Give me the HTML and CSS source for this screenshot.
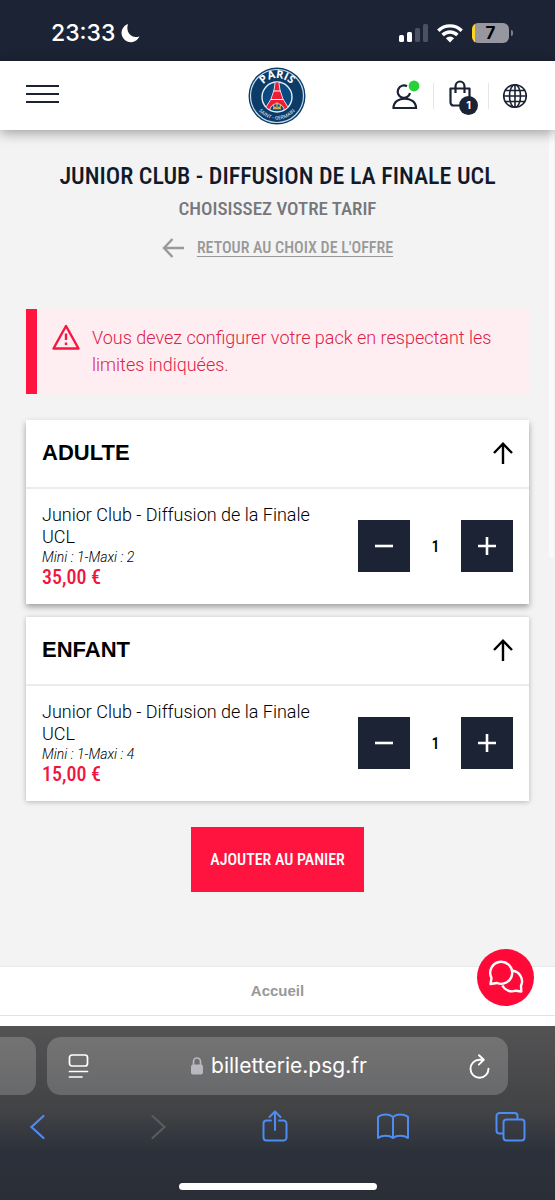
FILE: index.html
```html
<!DOCTYPE html>
<html lang="fr">
<head>
<meta charset="utf-8">
<meta name="viewport" content="width=device-width, initial-scale=1">
<title>Junior Club - Diffusion de la Finale UCL</title>
<link rel="stylesheet" href="styles.css">
</head>
<body>
<div class="status">
  <div class="status-time">23:33
    <svg width="19" height="20" viewBox="0 0 19 20"><path d="M7 1A9.300 9.300 0 1 0 18.500 13.200C11.500 16.500 4 9.500 7 1Z" fill="#fff"/></svg>
  </div>
  <div class="status-icons">
    <svg width="29" height="19" viewBox="0 0 29 19"><rect y="11" width="5" height="7" rx="1.5" fill="#fff"/><rect x="8" y="8" width="5" height="10" rx="1.5" fill="#fff"/><rect x="16" y="4" width="5" height="14" rx="1.5" fill="#4a5160"/><rect x="24" width="5" height="18" rx="1.5" fill="#4a5160"/></svg>
    <svg width="26" height="19" viewBox="0 0 26 19" fill="none" stroke="#fff" stroke-width="3.4"><path d="M1.3 6.7a16.6 16.6 0 0 1 23.4 0M5.6 11a10.5 10.5 0 0 1 14.8 0"/><path d="M13 18.5 8.9 14.300a5.800 5.800 0 0 1 8.200 0Z" fill="#fff" stroke="none"/></svg>
    <div class="battery">7</div>
  </div>
</div>

<header class="header">
  <button class="icon-btn menu" aria-label="Menu"><span></span><span></span><span></span></button>
  <a class="logo" href="#" aria-label="Paris Saint-Germain">
    <svg width="58" height="58" viewBox="0 0 58 58">
      <defs>
        <path id="arc-top" d="M11 29a18 18 0 0 1 36 0"/>
        <path id="arc-bottom" d="M5.500 29a23.500 23.500 0 0 0 47 0"/>
        <clipPath id="disc"><circle cx="29" cy="30" r="14.500"/></clipPath>
      </defs>
      <circle cx="29" cy="29" r="28.500" fill="#0b3b66"/>
      <circle cx="29" cy="29" r="26.500" fill="none" stroke="#c5dceb" stroke-width="1.200"/>
      <circle cx="29" cy="30" r="15" fill="#0b4a80" stroke="#e6f0f7" stroke-width="1.400"/>
      <g clip-path="url(#disc)">
        <path d="M27.500 13h3l1.500 10 3 9 8 13h-6.500c0-11-15-11-15 0H15L23 32l3-9Z" fill="#ee1c35" stroke="#fff" stroke-width=".8"/>
        <path d="M25.500 24h7M23 32.500h12" stroke="#fff" stroke-width="1"/>
      </g>
      <path d="M29 35v7M26 37.500c-1.500 2 0 3 2 3M32 37.500c1.500 2 0 3-2 3M25 41.500h8" fill="none" stroke="#d1ae55" stroke-width="1.300"/>
      <text class="logo-top" text-anchor="middle"><textPath href="#arc-top" startOffset="50%">PARIS</textPath></text>
      <text class="logo-bottom" text-anchor="middle"><textPath href="#arc-bottom" startOffset="50%">SAINT - GERMAIN</textPath></text>
    </svg>
  </a>
  <nav class="tools">
    <button class="icon-btn" aria-label="Compte">
      <svg width="30" height="30" viewBox="0 0 30 30" fill="none" stroke="#1a2233" stroke-width="2.200"><path d="M17 5.300A6.200 6.200 0 1 0 20 12"/><path d="M3.500 27c0-12.500 22.500-12.500 22.500 0Z"/><circle cx="24" cy="5" r="5.400" fill="#28d138" stroke="none"/></svg>
    </button>
    <button class="icon-btn cart" aria-label="Panier">
      <svg width="30" height="34" viewBox="0 0 30 34"><path d="M3.500 9.500h19v14a3 3 0 0 1-3 3h-13a3 3 0 0 1-3-3ZM8.500 14V7.500a4.500 5 0 0 1 9 0V14" fill="none" stroke="#1a2233" stroke-width="2.200" stroke-linejoin="round"/></svg>
      <span class="badge">1</span>
    </button>
    <button class="icon-btn" aria-label="Langue">
      <svg width="26" height="26" viewBox="0 0 26 26" fill="none" stroke="#1a2233" stroke-width="1.600"><circle cx="13" cy="13" r="11.300"/><ellipse cx="13" cy="13" rx="5.500" ry="11.300"/><path d="M13 1.500v23M1.500 13h23M3.500 7.500h19M3.500 18.500h19"/></svg>
    </button>
  </nav>
</header>

<main class="main">
  <div class="scrollbar"></div>
  <h1>Junior Club - Diffusion de la Finale UCL</h1>
  <h2>Choisissez votre tarif</h2>
  <div class="back">
    <svg width="22" height="20" viewBox="0 0 22 20" fill="none" stroke="#999" stroke-width="2.400"><path d="M10.500 1 2 10l8.500 9M2 10h20"/></svg>
    <a href="#">Retour au choix de l'offre</a>
  </div>

  <div class="alert" role="alert">
    <svg width="28" height="26" viewBox="0 0 28 26" fill="none" stroke="#f5173f" stroke-width="2.400" stroke-linejoin="round"><path d="M14 2 26.500 24.500h-25ZM14 9.500v6.500M14 18.500v2.500"/></svg>
    <p>Vous devez configurer votre pack en respectant les limites indiquées.</p>
  </div>

  <section class="card raised">
    <div class="card-head">
      <h3>ADULTE</h3>
      <button class="icon-btn" aria-label="Replier"><svg width="20" height="22" viewBox="0 0 20 22" fill="none" stroke="#000" stroke-width="2.400"><path d="M10 22V2M1 11l9-9.300 9 9.300"/></svg></button>
    </div>
    <div class="card-body">
      <div class="offer">
        <div class="offer-name">Junior Club - Diffusion de la Finale UCL</div>
        <div class="limits">Mini : 1-Maxi : 2</div>
        <div class="price">35,00 €</div>
      </div>
      <div class="stepper">
        <button aria-label="Retirer un adulte"><svg width="20" height="20" viewBox="0 0 20 20"><path d="M1 10h18" stroke="#fff" stroke-width="2.600"/></svg></button>
        <output>1</output>
        <button aria-label="Ajouter un adulte"><svg width="20" height="20" viewBox="0 0 20 20"><path d="M1 10h18M10 1v18" stroke="#fff" stroke-width="2.600"/></svg></button>
      </div>
    </div>
  </section>

  <section class="card">
    <div class="card-head">
      <h3>ENFANT</h3>
      <button class="icon-btn" aria-label="Replier"><svg width="20" height="22" viewBox="0 0 20 22" fill="none" stroke="#000" stroke-width="2.400"><path d="M10 22V2M1 11l9-9.300 9 9.300"/></svg></button>
    </div>
    <div class="card-body">
      <div class="offer">
        <div class="offer-name">Junior Club - Diffusion de la Finale UCL</div>
        <div class="limits">Mini : 1-Maxi : 4</div>
        <div class="price">15,00 €</div>
      </div>
      <div class="stepper">
        <button aria-label="Retirer un enfant"><svg width="20" height="20" viewBox="0 0 20 20"><path d="M1 10h18" stroke="#fff" stroke-width="2.600"/></svg></button>
        <output>1</output>
        <button aria-label="Ajouter un enfant"><svg width="20" height="20" viewBox="0 0 20 20"><path d="M1 10h18M10 1v18" stroke="#fff" stroke-width="2.600"/></svg></button>
      </div>
    </div>
  </section>

  <button class="submit">AJOUTER AU PANIER</button>
</main>

<footer class="footer">
  <div class="crumb"><a href="#">Accueil</a></div>
  <button class="chat" aria-label="Discussion">
    <svg width="36" height="34" viewBox="0 0 36 34" fill="none" stroke="#fff" stroke-width="2.400" stroke-linejoin="round"><path d="M2.500 23 3.500 17A11 11 0 1 1 9 22Z"/><path d="M24.400 9.800a10.500 10.500 0 0 1 8.600 15L33.300 30.500l-5.500-.8A11 11 0 0 1 14.300 24.500"/></svg>
  </button>
</footer>

<div class="browser">
  <div class="tabs">
    <div class="tab-prev"></div>
    <div class="address">
      <svg width="21" height="25" viewBox="0 0 21 25" fill="none" stroke="#fff" stroke-width="1.700" stroke-linecap="round"><rect x="1.500" y="1" width="18" height="11" rx="2.500"/><path d="M1.500 17.500h18M1.500 23h12.500"/></svg>
      <div class="url">
        <svg width="12" height="18" viewBox="0 0 12 18"><rect y="7.500" width="12" height="10" rx="2" fill="#b9b8c0"/><path d="M2.500 8V5a3.500 4 0 0 1 7 0v3" fill="none" stroke="#b9b8c0" stroke-width="1.700"/></svg>
        <span>billetterie.psg.fr</span>
      </div>
      <button class="icon-btn" aria-label="Actualiser"><svg width="21" height="25" viewBox="0 0 21 25" fill="none" stroke="#fff" stroke-width="1.900" stroke-linecap="round" stroke-linejoin="round"><path d="M14 5.800H10.500a9 9 0 1 0 9 9M10 1.200l4.800 4.600-5 4.800"/></svg></button>
    </div>
    <div class="tab-next"></div>
  </div>
  <nav class="toolbar">
    <button class="icon-btn" aria-label="Précédent"><svg width="32" height="34" viewBox="0 0 32 34" fill="none" stroke="#4c8cf5" stroke-width="2.200" stroke-linecap="round"><path d="M19.500 6 7.500 17l12 11"/></svg></button>
    <button class="icon-btn" aria-label="Suivant"><svg width="32" height="34" viewBox="0 0 32 34" fill="none" stroke="#5a5b60" stroke-width="2.200" stroke-linecap="round"><path d="M10.500 6l12 11-12 11"/></svg></button>
    <button class="icon-btn" aria-label="Partager"><svg width="32" height="34" viewBox="0 0 32 34" fill="none" stroke="#4c8cf5" stroke-width="2" stroke-linecap="round" stroke-linejoin="round"><path d="M11 10.500H6.500a3 3 0 0 0-3 3v14a3 3 0 0 0 3 3h17a3 3 0 0 0 3-3v-14a3 3 0 0 0-3-3H19M15 20V2M9.500 7 15 1.500 20.500 7"/></svg></button>
    <button class="icon-btn" aria-label="Signets"><svg width="32" height="34" viewBox="0 0 32 34" fill="none" stroke="#4c8cf5" stroke-width="2" stroke-linejoin="round"><path d="M16 28V7C12.500 3.500 5 3.500 1 7v21c4-3 11.500-3 15 0 3.500-3 11-3 15 0V7c-4-3.500-11.500-3.500-15 0"/></svg></button>
    <button class="icon-btn" aria-label="Onglets"><svg width="32" height="34" viewBox="0 0 32 34" fill="none" stroke="#4c8cf5" stroke-width="2"><path d="M8 23.500H4.500a3 3 0 0 1-3-3V6a3 3 0 0 1 3-3H19.500a3 3 0 0 1 3 3V9.500"/><rect x="8.500" y="9.500" width="21" height="21" rx="3"/></svg></button>
  </nav>
  <div class="home"></div>
</div>
</body>
</html>
```
FILE: styles.css
```css
* { box-sizing: border-box; }
body {
  margin: 0;
  min-height: 100vh;
  display: flex;
  flex-direction: column;
  background: #f3f3f3;
  color: #000;
  font-family: "Roboto", "Liberation Sans", sans-serif;
}
h1, h2, h3, p { margin: 0; }
button { font-family: inherit; border: 0; padding: 0; cursor: pointer; }
svg { display: block; flex: none; overflow: visible; }
.icon-btn { background: none; display: flex; align-items: center; justify-content: center; }

.status {
  height: 61px;
  padding: 5px 43px 0 51px;
  display: flex;
  align-items: center;
  justify-content: space-between;
  background: #1b2334;
  color: #fff;
}
.status-time { display: flex; align-items: center; gap: 6px; font: 500 23px/30px "Inter", sans-serif; }
.status-icons { display: flex; align-items: center; gap: 9px; }
.battery {
  position: relative;
  width: 37px;
  height: 20px;
  margin-right: 3px;
  border-radius: 6px;
  background: linear-gradient(90deg, #ffd426 3px, #9697a0 3px);
  color: #000;
  font: 700 17px/20px "Inter", sans-serif;
  text-align: center;
}
.battery::after {
  content: "";
  position: absolute;
  right: -4px;
  top: 7px;
  width: 2px;
  height: 6px;
  border-radius: 0 2px 2px 0;
  background: #7c7f89;
}

.header {
  position: relative;
  z-index: 1;
  height: 69px;
  padding: 0 27px 0 26px;
  display: grid;
  grid-template-columns: 1fr auto 1fr;
  align-items: center;
  background: #fff;
  box-shadow: 0 3px 12px rgba(0, 0, 0, .35);
}
.menu { flex-direction: column; gap: 6px; width: 33px; height: 30px; margin-bottom: 4px; }
.menu span { width: 33px; height: 2px; background: #1a2233; }
.logo-top { font: 700 11px "Open Sans", sans-serif; fill: #fff; }
.logo-bottom { font: 600 5px "Open Sans", sans-serif; fill: #c5dceb; }
.tools { display: flex; align-items: center; justify-content: flex-end; }
.tools .icon-btn + .icon-btn { border-left: 1px solid #e6e6e6; height: 26px; margin-left: 13px; padding-left: 13px; }
.tools .icon-btn.cart { position: relative; padding-right: 11px; }
.tools .cart + .icon-btn { margin-left: 0; }
.badge {
  position: absolute;
  left: 25px;
  top: 13px;
  width: 19px;
  height: 19px;
  border-radius: 50%;
  background: #1b2334;
  color: #fff;
  font: 700 11px/19px "Inter", sans-serif;
}

.main {
  position: relative;
  flex: 1;
  padding: 29px 26px 74px;
  display: flex;
  flex-direction: column;
}
.scrollbar { position: absolute; top: 0; right: 1px; width: 5px; height: 428px; border-radius: 3px; background: #fafafa; }
h1, h2, .back, .price, .submit, output { font-family: "Roboto Condensed", "Liberation Sans Narrow", "Liberation Sans", sans-serif; }
h1 { font-size: 24px; line-height: 34px; font-weight: 500; text-align: center; text-transform: uppercase; color: #111a2b; }
h2 { font-size: 19px; line-height: 32px; font-weight: 500; text-align: center; text-transform: uppercase; color: #76777b; }
.back { display: flex; justify-content: center; align-items: center; gap: 13px; margin-top: 10px; font-size: 16px; line-height: 26px; font-weight: 500; text-transform: uppercase; }
.back a { color: #999; text-decoration-thickness: 1px; text-underline-offset: 3px; }

.alert {
  display: flex;
  gap: 12px;
  min-height: 85px;
  margin: 48px -1px 26px 0;
  padding: 15px 20px 15px 15px;
  border-left: 11px solid #ff143f;
  background: #ffeef1;
  color: #dc214a;
  font-size: 18px;
  line-height: 27px;
  font-weight: 300;
}

.card { margin-bottom: 13px; background: #fff; box-shadow: 0 1px 5px rgba(0, 0, 0, .25); }
.card.raised { box-shadow: 0 3px 6px rgba(0, 0, 0, .35); }
.card-head {
  height: 69px;
  padding: 0 16px 2px;
  display: flex;
  align-items: center;
  justify-content: space-between;
  border-bottom: 2px solid #ececec;
}
h3 { font: 700 22px/30px "Liberation Sans", sans-serif; }
.card-body { display: flex; align-items: center; justify-content: space-between; padding: 15px 16px 16px; }
.offer { flex: 0 1 280px; }
.offer-name { font-size: 18px; line-height: 22px; font-weight: 300; }
.limits { font-size: 14px; line-height: 18px; font-weight: 300; font-style: italic; }
.price { font-size: 20px; line-height: 22px; font-weight: 500; color: #f0143f; }
.stepper { display: flex; align-items: center; }
.stepper button { width: 52px; height: 52px; display: grid; place-items: center; background: #1b2334; }
output { width: 51px; text-align: center; font-size: 16px; font-weight: 500; }
.submit {
  align-self: center;
  min-height: 65px;
  margin-top: 13px;
  padding: 0 19px;
  background: #ff143f;
  color: #fff;
  font-size: 16px;
  font-weight: 500;
}

.footer { position: relative; background: #fff; border-top: 1px solid #e8e8e8; padding-bottom: 10px; }
.crumb { border-bottom: 1px solid #e2e2e2; text-align: center; font: 700 15px/48px "Liberation Sans", sans-serif; }
.crumb a { color: #999; text-decoration: none; }
.chat {
  position: absolute;
  right: 21px;
  top: -18px;
  width: 57px;
  height: 57px;
  border-radius: 50%;
  display: grid;
  place-items: center;
  background: #ff0a38;
}

.browser {
  padding: 11px 0 12px;
  background: linear-gradient(#535354, #424345 48%, #2b303a 72%, #292e36);
}
.tabs { display: flex; gap: 11px; }
.tab-prev, .tab-next, .address { height: 58px; background: linear-gradient(#737373, #68696b); }
.tab-prev { width: 36px; border-radius: 0 14px 14px 0; }
.tab-next { width: 36px; visibility: hidden; }
.address { flex: 1; display: flex; align-items: center; justify-content: space-between; padding: 0 18px 0 21px; border-radius: 14px; }
.url { display: flex; align-items: center; gap: 8px; color: #fff; font: 400 21px/28px "Inter", sans-serif; }
.toolbar { display: flex; justify-content: space-between; padding: 15px 28px 0 24px; }
.home { width: 198px; height: 7px; margin: 39px auto 0; border-radius: 4px; background: #fff; }
```
